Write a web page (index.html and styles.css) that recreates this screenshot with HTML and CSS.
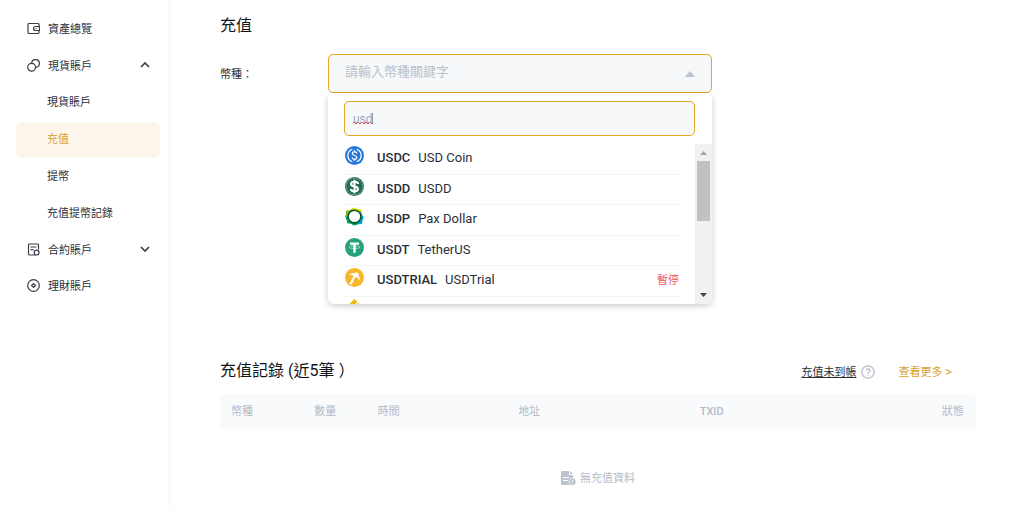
FILE: index.html
```html
<!DOCTYPE html>
<html lang="zh-Hant">
<head>
<meta charset="utf-8">
<meta name="viewport" content="width=device-width, initial-scale=1">
<title>充值</title>
<link rel="stylesheet" href="styles.css">
</head>
<body>
<div class="layout">
  <nav class="sidebar">
    <a class="nav-item" href="#">
      <svg class="nav-icon" viewBox="0 0 13 13"><path d="M12 4V2.500a1 1 0 0 0-1-1H2a1 1 0 0 0-1 1v8a1 1 0 0 0 1 1h9a1 1 0 0 0 1-1V9M12.500 4.500H8.500a2 2 0 0 0 0 4h4zM8.500 6.500h1"/></svg>
      <span>資產總覽</span>
    </a>
    <button class="nav-item" type="button" aria-expanded="true">
      <svg class="nav-icon" viewBox="0 0 13 13"><circle cx="4.600" cy="8.200" r="3.900"/><path d="M4.600 4.100A3.900 3.900 0 1 1 8.700 8.400"/></svg>
      <span>現貨賬戶</span>
      <svg class="chevron" viewBox="0 0 10 6"><path d="M1 5l4-4 4 4"/></svg>
    </button>
    <div class="subnav">
      <a class="sub-item" href="#">現貨賬戶</a>
      <a class="sub-item active" href="#">充值</a>
      <a class="sub-item" href="#">提幣</a>
      <a class="sub-item" href="#">充值提幣記錄</a>
    </div>
    <button class="nav-item" type="button" aria-expanded="false">
      <svg class="nav-icon" viewBox="0 0 13 13"><path d="M11.500 6.500V2a1 1 0 0 0-1-1h-8a1 1 0 0 0-1 1v9a1 1 0 0 0 1 1h6M3.500 4h6M3.500 6.700h3"/><circle cx="9.600" cy="9.600" r="2.400"/></svg>
      <span>合約賬戶</span>
      <svg class="chevron" viewBox="0 0 10 6"><path d="M1 1l4 4 4-4"/></svg>
    </button>
    <a class="nav-item" href="#">
      <svg class="nav-icon" viewBox="0 0 13 13"><circle cx="6.500" cy="6.500" r="5.800"/><path d="M6.500 4.500l2 2-2 2-2-2z"/></svg>
      <span>理財賬戶</span>
    </a>
  </nav>

  <main class="main">
    <h1 class="title">充值</h1>
    <div class="field">
      <label class="field-label" for="coin">幣種：</label>
      <div class="picker">
        <input class="picker-input" id="coin" type="text" placeholder="請輸入幣種關鍵字" readonly>
        <svg class="picker-arrow" viewBox="0 0 10 6"><path d="M0 6l5-6 5 6z"/></svg>
        <div class="dropdown">
          <input class="search" type="text" value="usd" aria-label="搜尋幣種" spellcheck="false">
          <div class="list-wrap">
            <ul class="coins">
              <li class="coin">
                <svg class="coin-icon" viewBox="0 0 20 20"><circle cx="10" cy="10" r="10" fill="#2478dc"/><g fill="none" stroke="#fff" stroke-width="1.300"><path d="M7.700 3.400a7 7 0 0 0 0 13.200M12.300 3.400a7 7 0 0 1 0 13.200"/><path d="M12.300 8c0-1.300-1-1.900-2.300-1.900S7.700 6.800 7.700 8c0 2.700 4.700 1.300 4.700 4 0 1.200-1.100 1.900-2.400 1.900S7.600 13.200 7.600 12M10 4.600v1.500M10 13.900v1.500"/></g></svg>
                <b>USDC</b><span>USD Coin</span>
              </li>
              <li class="coin">
                <svg class="coin-icon" viewBox="0 0 20 20"><circle cx="10" cy="10" r="10" fill="#216c58"/><circle cx="10" cy="10" r="8.700" fill="none" stroke="#b6d4cb" stroke-width=".7" stroke-dasharray="2 1"/><path d="M13.600 7.300C13.600 5.700 12 5 10 5S6.400 5.700 6.400 7.400c0 3.600 7.200 1.800 7.200 5.200 0 1.600-1.600 2.400-3.600 2.400s-3.700-.8-3.700-2.500M10 3v14" fill="none" stroke="#fff" stroke-width="2.200"/></svg>
                <b>USDD</b><span>USDD</span>
              </li>
              <li class="coin">
                <svg class="coin-icon" viewBox="0 0 20 20"><path d="M1 4Q6 3.500 9 .5q3 1.500 8 2l1 4-9 4z" fill="#e8e000"/><path d="M1 4Q5 4 8 2l3 8-8 5Q1 12 .3 10 1.500 7 1 4z" fill="#7bbb32"/><path d="M16.500 5q1 3 3.200 6-1.700 3-1.700 6.500-4 0-8 2l-2-7z" fill="#009dd2"/><path d="M.3 10q2 4 2 7 4 0 7 2.500l5-2-4-8z" fill="#00a650"/><circle cx="10" cy="10" r="7.500" fill="#075329"/><circle cx="10" cy="10" r="5.900" fill="#fff"/></svg>
                <b>USDP</b><span>Pax Dollar</span>
              </li>
              <li class="coin">
                <svg class="coin-icon" viewBox="0 0 20 20"><circle cx="10" cy="10" r="10" fill="#26a17b"/><path d="M5.200 4.800h9.600v2.400h-3.500v8.200H8.700V7.200H5.200z" fill="#fff"/><ellipse cx="10" cy="9.800" rx="5.800" ry="1.300" fill="none" stroke="#fff" stroke-width=".5"/></svg>
                <b>USDT</b><span>TetherUS</span>
              </li>
              <li class="coin">
                <svg class="coin-icon" viewBox="0 0 20 20"><circle cx="10" cy="10" r="10" fill="#f8b62d"/><path d="M4 7.200q4-3.400 8-1 4 2.600 4.200 7.300-1.800-3-5.200-4.300L6.800 18 4.600 16.600l4.700-8.400Q7 7 4 7.200z" fill="#fff"/><path d="M11.500 4.200l3.300 2.100-1.500 3-3.700-2.200z" fill="#fff"/></svg>
                <b>USDTRIAL</b><span>USDTrial</span><em class="paused">暫停</em>
              </li>
              <li class="coin">
                <svg class="coin-icon" viewBox="0 0 20 20"><path d="M10 0l3 3-9 9-3-3zM14 4l3 3-9 9-3-3z" fill="#f0b90b"/></svg>
              </li>
            </ul>
            <div class="scrollbar" aria-hidden="true">
              <svg class="scroll-arrow up" viewBox="0 0 7 4"><path d="M0 4l3.500-4L7 4z"/></svg>
              <div class="thumb"></div>
              <svg class="scroll-arrow down" viewBox="0 0 7 4"><path d="M0 0h7L3.500 4z"/></svg>
            </div>
          </div>
        </div>
      </div>
    </div>

    <section class="records">
      <header class="records-head">
        <h2 class="title">充值記錄 (近5筆 ）</h2>
        <div class="links">
          <a class="missing" href="#">充值未到帳</a>
          <svg class="help" viewBox="0 0 14 14"><circle cx="7" cy="7" r="6.200"/><path d="M5.200 5.600c0-2.500 3.700-2.300 3.700-.2C8.900 6.800 7 6.700 7 8.400M7 9.700v1.100"/></svg>
          <a class="more" href="#">查看更多 <span class="more-arrow">&gt;</span></a>
        </div>
      </header>
      <table class="table">
        <thead>
          <tr><th class="c-coin">幣種</th><th class="c-amount">數量</th><th class="c-time">時間</th><th class="c-address">地址</th><th class="c-txid">TXID</th><th class="c-status">狀態</th></tr>
        </thead>
        <tbody>
          <tr><td colspan="6">
            <div class="empty">
              <svg class="empty-icon" viewBox="0 0 15 14"><path d="M1 0h7v4h4v3.200a3.600 3.600 0 0 0-3.600 5.800l.8 1H1a1 1 0 0 1-1-1V1a1 1 0 0 1 1-1z" fill="#bcc4ce"/><path d="M9 0l3 3H9z" fill="#bcc4ce"/><path d="M2 6.500h6M2 9.500h5" stroke="#fff"/><circle cx="11.500" cy="10.800" r="3.200" fill="#bcc4ce"/><path d="M11.500 8.900v2.400M11.500 12v.8" stroke="#fff" stroke-width=".7"/></svg>
              <span>無充值資料</span>
            </div>
          </td></tr>
        </tbody>
      </table>
    </section>
  </main>
</div>
</body>
</html>
```
FILE: styles.css
```css
* { box-sizing: border-box; }

body {
  margin: 0;
  background: #fff;
  color: #2b2f3a;
  font: 11px/16px Roboto, "Noto Sans CJK TC", sans-serif;
}

a { color: inherit; text-decoration: none; }
button, input { font: inherit; color: inherit; }

.layout { display: flex; min-height: 100vh; }

.sidebar {
  flex: 0 0 172px;
  padding: 11px 8px 0 16px;
  border-right: 4px solid #fafafa;
}

.nav-item {
  display: flex;
  align-items: center;
  gap: 8px;
  width: 144px;
  height: 36px;
  padding: 0 10px 2px 11px;
  border: 0;
  background: none;
  text-align: left;
}
.nav-item:first-child { margin-bottom: 1px; }
.nav-item span { padding-top: 3px; }

.nav-icon, .chevron { fill: none; stroke: #3a3f4a; }
.nav-icon { width: 13px; height: 13px; stroke-width: 1.2; }
.chevron { width: 10px; height: 6px; margin-left: auto; stroke-width: 1.7; }

.subnav { display: grid; gap: 1px; padding-top: 1px; }
.sub-item {
  width: 144px;
  height: 36px;
  padding: 10px 0 0 31px;
  border-radius: 6px;
}
.sub-item.active { background: #fcf7ea; color: #d9a02c; }

.main { flex: 1; min-width: 0; padding: 14px 55px 0 48px; }

.title {
  margin: 0;
  color: #14151a;
  font-size: 16px;
  font-weight: 400;
  line-height: 24px;
}

.field { display: flex; margin-top: 16px; }
.field-label { flex: 0 0 108px; padding-top: 13px; }

.picker { position: relative; flex: 0 1 384px; }
.picker-input, .search {
  display: block;
  width: 100%;
  border: 1px solid #e0a820;
  border-radius: 5px;
  outline: 0;
  background: #f6f8fa;
}
.picker-input { height: 39px; padding: 0 40px 4px 16px; font-size: 13px; }
.picker-input::placeholder { color: #b9c1ca; }
.picker-arrow {
  position: absolute;
  top: 17px;
  right: 17px;
  width: 10px;
  height: 6px;
  fill: #b9c4ce;
}

.dropdown {
  position: absolute;
  top: 39px;
  left: 0;
  width: 100%;
  padding-top: 8px;
  border-radius: 6px;
  background: #fff;
  box-shadow: 0 2px 6px rgba(0, 0, 0, .2);
}
.search {
  width: calc(100% - 33px);
  height: 35px;
  margin-left: 16px;
  padding: 0 8px;
  background:
    repeating-linear-gradient(90deg, #f33 0 2px, transparent 2px 4px) 8px 20px / 19px 1px no-repeat,
    repeating-linear-gradient(90deg, transparent 0 2px, #f33 2px 4px) 8px 21px / 19px 1px no-repeat,
    linear-gradient(#8795b3, #8795b3) 27px 11px / 1px 11px no-repeat,
    #f6f8fa;
  color: #9aa8bf;
  font-size: 12px;
}

.list-wrap {
  display: flex;
  height: 160px;
  margin-top: 8px;
  overflow: hidden;
  border-radius: 0 0 6px 6px;
}
.coins {
  display: grid;
  flex: 1;
  grid-template-rows: 31px repeat(5, 1fr);
  height: 183px;
  margin: 0;
  padding: 0 15px 0 16px;
  list-style: none;
}
.coin {
  display: flex;
  align-items: flex-start;
  padding: 2px 1px 0;
  border-bottom: 1px solid #f4f5f8;
  font-size: 13px;
}
.coin-icon { width: 19px; height: 19px; margin-right: 13px; }
.coin b { padding-top: 4px; font-weight: 500; }
.coin span { margin-left: 8px; padding-top: 4px; }
.paused {
  margin-left: auto;
  padding-top: 5px;
  color: #ee5757;
  font-size: 11px;
  font-style: normal;
}

.scrollbar {
  display: flex;
  flex: 0 0 17px;
  flex-direction: column;
  align-items: center;
  justify-content: space-between;
  background: #f1f1f1;
  padding: 7px 2px;
}
.scroll-arrow { width: 7px; height: 4px; }
.up { fill: #a3a3a3; }
.down { fill: #444; }
.thumb { width: 13px; height: 60px; margin: 6px 0 auto; background: #c1c1c1; }

.records { margin-top: 266px; }
.records-head {
  display: flex;
  align-items: center;
  justify-content: space-between;
  padding-right: 24px;
}
.links { display: flex; align-items: center; padding-top: 2px; }
.missing { padding-top: 1px; text-decoration: underline; text-underline-offset: 1px; }
.help {
  width: 14px;
  height: 14px;
  margin: 0 23px 0 5px;
  fill: none;
  stroke: #b4bdc8;
  stroke-width: 1.3;
}
.more { padding-top: 1px; color: #d9a02c; }
.more-arrow { font-size: 13px; }

.table {
  width: 100%;
  margin-top: 11px;
  border-collapse: collapse;
  table-layout: fixed;
  color: #b4bbc6;
}
.table th {
  height: 35px;
  padding: 1px 0 0 11px;
  background: #f8fafc;
  font-weight: 400;
  text-align: left;
}
.table th:first-child { border-radius: 6px 0 0 0; }
.table th:last-child { border-radius: 0 6px 0 0; padding-right: 12px; text-align: right; }
.table .c-txid { font-weight: 500; }
.c-coin { width: 11%; }
.c-amount { width: 8.4%; }
.c-time { width: 18.6%; }
.c-address { width: 24%; }
.c-txid { width: 19%; }
.table td { padding: 40px 0 0; }
.empty { display: flex; align-items: center; justify-content: center; gap: 4px; }
.empty span { padding-top: 2px; }
.empty-icon { width: 15px; height: 14px; }
```
